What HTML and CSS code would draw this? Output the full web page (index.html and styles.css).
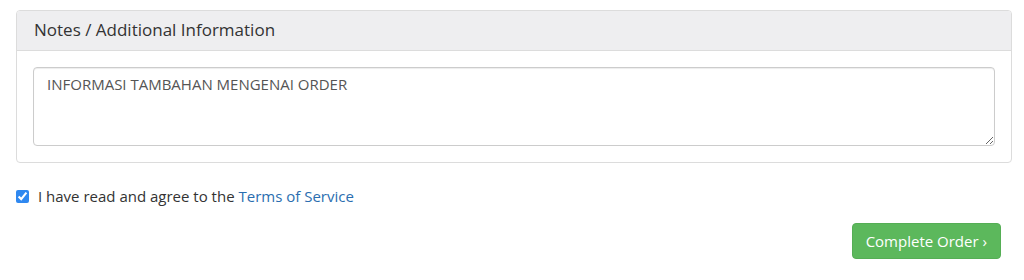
FILE: index.html
```html
<!DOCTYPE html>
<html>
<head>
<meta charset="utf-8">
<link rel="stylesheet" href="styles.css">
</head>
<body>
<div class="page">
  <div class="panel">
    <div class="panel-heading">Notes / Additional Information</div>
    <div class="panel-body">
      <textarea class="notes" rows="3">INFORMASI TAMBAHAN MENGENAI ORDER</textarea>
    </div>
  </div>
  <label class="agree">
    <input type="checkbox" class="check" checked>
    <span>I have read and agree to the <a href="#" class="tos">Terms of Service</a></span>
  </label>
  <div class="actions">
    <button class="btn-complete">Complete Order <span class="chev">›</span></button>
  </div>
</div>
</body>
</html>
```
FILE: styles.css
```css
html, body {
  margin: 0;
  padding: 0;
  background: #ffffff;
}
body {
  font-family: "Open Sans", "Liberation Sans", sans-serif;
  font-size: 15px;
  color: #333333;
}
.page {
  padding: 10px 12px 0 16px;
}
.panel {
  border: 1px solid #dcdcdc;
  border-radius: 4px;
  background: #ffffff;
}
.panel-heading {
  background: #eeeef0;
  border-bottom: 1px solid #dcdcdc;
  border-radius: 3px 3px 0 0;
  height: 40px;
  box-sizing: border-box;
  padding: 0 17px 2px;
  display: flex;
  align-items: center;
  font-size: 17px;
  color: #333333;
}
.panel-body {
  padding: 16px;
  display: flex;
}
.notes {
  flex: 1;
  height: 79px;
  box-sizing: border-box;
  border: 1px solid #cccccc;
  border-radius: 4px;
  padding: 6px 13px;
  font-family: "Open Sans", "Liberation Sans", sans-serif;
  font-size: 15px;
  line-height: 20px;
  color: #555555;
  box-shadow: inset 0 1px 1px rgba(0,0,0,0.075);
  resize: vertical;
  margin: 0;
}
.agree {
  display: flex;
  align-items: center;
  gap: 9px;
  margin-top: 23px;
  line-height: 20px;
}
.check {
  margin: 0;
  width: 13px;
  height: 13px;
  accent-color: #2f88f0;
}
.tos {
  color: #2a6eb0;
  text-decoration: none;
}
.actions {
  display: flex;
  justify-content: flex-end;
  padding-right: 11px;
  margin-top: 17px;
}
.btn-complete {
  background: #5cb85c;
  border: 1px solid #55ae55;
  border-radius: 4px;
  color: #ffffff;
  font-family: "Open Sans", "Liberation Sans", sans-serif;
  font-size: 15px;
  height: 36px;
  padding: 0 13px;
  white-space: nowrap;
}
.chev {
  font-size: 15px;
}
```
